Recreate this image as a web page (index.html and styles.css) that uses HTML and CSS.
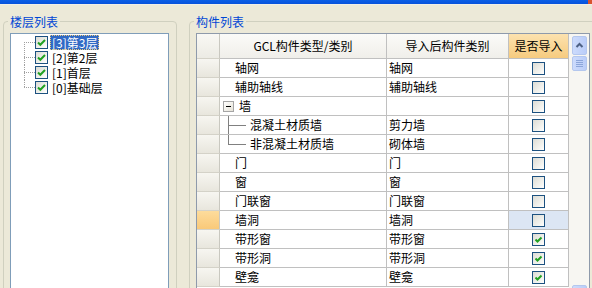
FILE: index.html
```html
<!DOCTYPE html>
<html lang="zh-CN">
<head>
<meta charset="utf-8">
<title>构件导入</title>
<link rel="stylesheet" href="styles.css">
</head>
<body>
<div class="titlebar"><span class="close"></span></div>
<div class="main">
  <fieldset class="group group-left">
    <legend>楼层列表</legend>
    <div class="listbox">
      <ul class="tree">
        <li class="node"><span class="stem first"></span><span class="cb checked"><svg viewBox="0 0 11 11" width="11" height="11"><path d="M2 5.5 L4.3 7.8 L9 3" fill="none" stroke="#21A121" stroke-width="2"/></svg></span><span class="label selected">[3]第3层</span></li>
        <li class="node"><span class="stem"></span><span class="cb checked"><svg viewBox="0 0 11 11" width="11" height="11"><path d="M2 5.5 L4.3 7.8 L9 3" fill="none" stroke="#21A121" stroke-width="2"/></svg></span><span class="label">[2]第2层</span></li>
        <li class="node"><span class="stem"></span><span class="cb checked"><svg viewBox="0 0 11 11" width="11" height="11"><path d="M2 5.5 L4.3 7.8 L9 3" fill="none" stroke="#21A121" stroke-width="2"/></svg></span><span class="label">[1]首层</span></li>
        <li class="node"><span class="stem last"></span><span class="cb checked"><svg viewBox="0 0 11 11" width="11" height="11"><path d="M2 5.5 L4.3 7.8 L9 3" fill="none" stroke="#21A121" stroke-width="2"/></svg></span><span class="label">[0]基础层</span></li>
      </ul>
    </div>
  </fieldset>
  <fieldset class="group group-right">
    <legend>构件列表</legend>
    <div class="grid">
      <div class="rows">
        <div class="row head">
          <div class="rh"></div>
          <div class="hc">GCL构件类型/类别</div>
          <div class="hc">导入后构件类别</div>
          <div class="hc hc-orange">是否导入</div>
        </div>
        <div class="row">
          <div class="rh"></div>
          <div class="c1">轴网</div>
          <div class="c2">轴网</div>
          <div class="c3"><span class="cb"></span></div>
        </div>
        <div class="row">
          <div class="rh"></div>
          <div class="c1">辅助轴线</div>
          <div class="c2">辅助轴线</div>
          <div class="c3"><span class="cb"></span></div>
        </div>
        <div class="row">
          <div class="rh"></div>
          <div class="c1 parent"><span class="toggle"><span class="minus"></span></span><span>墙</span></div>
          <div class="c2"></div>
          <div class="c3"><span class="cb"></span></div>
        </div>
        <div class="row">
          <div class="rh"></div>
          <div class="c1 child"><span class="branch"></span><span>混凝土材质墙</span></div>
          <div class="c2">剪力墙</div>
          <div class="c3"><span class="cb"></span></div>
        </div>
        <div class="row">
          <div class="rh"></div>
          <div class="c1 child"><span class="branch last"></span><span>非混凝土材质墙</span></div>
          <div class="c2">砌体墙</div>
          <div class="c3"><span class="cb"></span></div>
        </div>
        <div class="row">
          <div class="rh"></div>
          <div class="c1">门</div>
          <div class="c2">门</div>
          <div class="c3"><span class="cb"></span></div>
        </div>
        <div class="row">
          <div class="rh"></div>
          <div class="c1">窗</div>
          <div class="c2">窗</div>
          <div class="c3"><span class="cb"></span></div>
        </div>
        <div class="row">
          <div class="rh"></div>
          <div class="c1">门联窗</div>
          <div class="c2">门联窗</div>
          <div class="c3"><span class="cb"></span></div>
        </div>
        <div class="row current">
          <div class="rh"></div>
          <div class="c1">墙洞</div>
          <div class="c2">墙洞</div>
          <div class="c3"><span class="cb"></span></div>
        </div>
        <div class="row">
          <div class="rh"></div>
          <div class="c1">带形窗</div>
          <div class="c2">带形窗</div>
          <div class="c3"><span class="cb checked"><svg viewBox="0 0 11 11" width="11" height="11"><path d="M2.5 5.5 L4.5 7.5 L8.5 3.5" fill="none" stroke="#21A121" stroke-width="2"/></svg></span></div>
        </div>
        <div class="row">
          <div class="rh"></div>
          <div class="c1">带形洞</div>
          <div class="c2">带形洞</div>
          <div class="c3"><span class="cb checked"><svg viewBox="0 0 11 11" width="11" height="11"><path d="M2.5 5.5 L4.5 7.5 L8.5 3.5" fill="none" stroke="#21A121" stroke-width="2"/></svg></span></div>
        </div>
        <div class="row">
          <div class="rh"></div>
          <div class="c1">壁龛</div>
          <div class="c2">壁龛</div>
          <div class="c3"><span class="cb checked"><svg viewBox="0 0 11 11" width="11" height="11"><path d="M2.5 5.5 L4.5 7.5 L8.5 3.5" fill="none" stroke="#21A121" stroke-width="2"/></svg></span></div>
        </div>
      </div>
      <div class="vscroll">
        <div class="sbtn"><svg viewBox="0 0 13 17" width="13" height="17"><path d="M3.5 10 L6.5 7 L9.5 10" fill="none" stroke="#4D6185" stroke-width="2"/></svg></div>
        <div class="thumb"><span class="grip"></span><span class="grip"></span><span class="grip"></span><span class="grip"></span></div>
        <div class="sbtn down"></div>
      </div>
    </div>
  </fieldset>
</div>
</body>
</html>
```

FILE: styles.css
```css
* { box-sizing: border-box; }
html, body { margin: 0; padding: 0; }
body {
  width: 592px;
  height: 288px;
  overflow: hidden;
  background: #ECE9D8;
  font-family: "Noto Sans CJK SC", "Liberation Sans", sans-serif;
  font-size: 12px;
  color: #000;
}

.titlebar {
  height: 5px;
  background: linear-gradient(#0A5FE6, #0752DB);
  border-bottom: 1px solid #F1EFE6;
  display: flex;
  justify-content: flex-end;
}
.close { width: 4px; height: 4px; background: #D8532E; }

.main {
  display: flex;
  align-items: flex-start;
  gap: 12px;
  padding: 10px 0 0 3px;
}

.group {
  margin: 0;
  flex: none;
  min-width: 0;
  height: 300px;
  border: 1px solid #D0D0BF;
  border-radius: 4px;
  padding: 5px 7px 0 6px;
}
.group legend {
  padding: 0 2px;
  margin-left: -2px;
  font-size: 12px;
  line-height: 13px;
  color: #0046D5;
}
.group-left { width: 174px; }
.group-right { width: 410px; }

/* floor tree */
.listbox {
  width: 159px;
  height: 270px;
  background: #fff;
  border: 1px solid #7F9DB9;
  padding-top: 1px;
}
.tree { list-style: none; margin: 0; padding: 0; }
.node {
  display: flex;
  align-items: center;
  height: 15px;
  padding-left: 13px;
}
.stem {
  width: 11px;
  height: 15px;
  flex: none;
  background:
    repeating-linear-gradient(to right, #A0A0A0 0 1px, transparent 1px 2px) 0 7px / 100% 1px no-repeat,
    repeating-linear-gradient(to bottom, #A0A0A0 0 1px, transparent 1px 2px) 0 0 / 1px 100% no-repeat;
}
.stem.first {
  background:
    repeating-linear-gradient(to right, #A0A0A0 0 1px, transparent 1px 2px) 0 7px / 100% 1px no-repeat,
    repeating-linear-gradient(to bottom, #A0A0A0 0 1px, transparent 1px 2px) 0 7px / 1px 8px no-repeat;
}
.stem.last {
  background:
    repeating-linear-gradient(to right, #A0A0A0 0 1px, transparent 1px 2px) 0 7px / 100% 1px no-repeat,
    repeating-linear-gradient(to bottom, #A0A0A0 0 1px, transparent 1px 2px) 0 0 / 1px 8px no-repeat;
}
.label {
  margin-left: 2px;
  padding: 0 2px;
  height: 15px;
  line-height: 15px;
  white-space: nowrap;
}
.label.selected {
  background: #316AC5;
  color: #fff;
  outline: 1px dotted #E8C87A;
  outline-offset: -1px;
}

/* checkbox */
.cb {
  display: inline-flex;
  align-items: center;
  justify-content: center;
  width: 13px;
  height: 13px;
  flex: none;
  border: 1px solid #1C5180;
  background: linear-gradient(135deg, #DCDCD5 0%, #F4F4F0 70%, #FFFFFF 100%);
}
.cb svg { display: block; }

/* grid */
.grid {
  display: flex;
  width: 394px;
  height: 274px;
  border: 1px solid #8E9AAB;
  background: #fff;
}
.rows { width: 372px; flex: none; }
.row {
  display: grid;
  grid-template-columns: 23px 167px 122px 60px;
  height: 19px;
}
.row > div {
  border-right: 1px solid #C0C0C0;
  border-bottom: 1px solid #C0C0C0;
  display: flex;
  align-items: center;
  white-space: nowrap;
  overflow: hidden;
  line-height: 18px;
}
.row.head { height: 25px; }
.row .rh {
  background: linear-gradient(#F7F6F1, #E8E6DD);
  border-right-color: #C9C8C0;
  border-bottom-color: #D4D2C8;
}
.row.head .rh { background: linear-gradient(#F9F8F4, #ECEBE4); }
.row.current .rh { background: linear-gradient(#FDDC9C, #F9C979); }
.hc {
  justify-content: center;
  background: linear-gradient(#FBFBF8, #F0EFEA);
}
.hc-orange { background: linear-gradient(#FCE2AF, #F6CB7F); }
.c1 { padding-left: 15px; }
.c2 { padding-left: 2px; }
.c3 { justify-content: center; }
.row.current .c3 { background: #DCE6F4; }

.c1.parent { padding-left: 3px; }
.toggle {
  width: 11px;
  height: 11px;
  flex: none;
  border: 1px solid #A5A5A5;
  background: linear-gradient(135deg, #FFFFFF, #E6E3D8);
  display: flex;
  align-items: center;
  justify-content: center;
  margin-right: 5px;
}
.minus { width: 5px; height: 1px; background: #000; }

.c1.child { padding-left: 8px; }
.branch {
  width: 18px;
  height: 18px;
  flex: none;
  margin-right: 4px;
  background:
    linear-gradient(#808080, #808080) 0 9px / 100% 1px no-repeat,
    linear-gradient(#808080, #808080) 0 0 / 1px 100% no-repeat;
}
.branch.last {
  background:
    linear-gradient(#808080, #808080) 0 9px / 100% 1px no-repeat,
    linear-gradient(#808080, #808080) 0 0 / 1px 10px no-repeat;
}

/* scrollbar */
.vscroll {
  width: 20px;
  flex: none;
  background: #F7F6F2;
  display: flex;
  flex-direction: column;
  padding: 2px 2px 2px 3px;
}
.sbtn {
  width: 15px;
  height: 19px;
  border: 1px solid #B4C7EE;
  border-radius: 2px;
  background: linear-gradient(90deg, #CCDBFC, #BACDF8);
  display: flex;
  align-items: center;
  justify-content: center;
}
.sbtn.down { margin-top: auto; }
.thumb {
  width: 15px;
  height: 15px;
  margin-top: 1px;
  border: 1px solid #B4C7EE;
  border-radius: 2px;
  background: linear-gradient(90deg, #CCDBFC, #BACDF8);
  display: flex;
  flex-direction: column;
  align-items: center;
  justify-content: center;
  gap: 1px;
}
.grip { width: 7px; height: 1px; background: #8CA6DA; }
```
